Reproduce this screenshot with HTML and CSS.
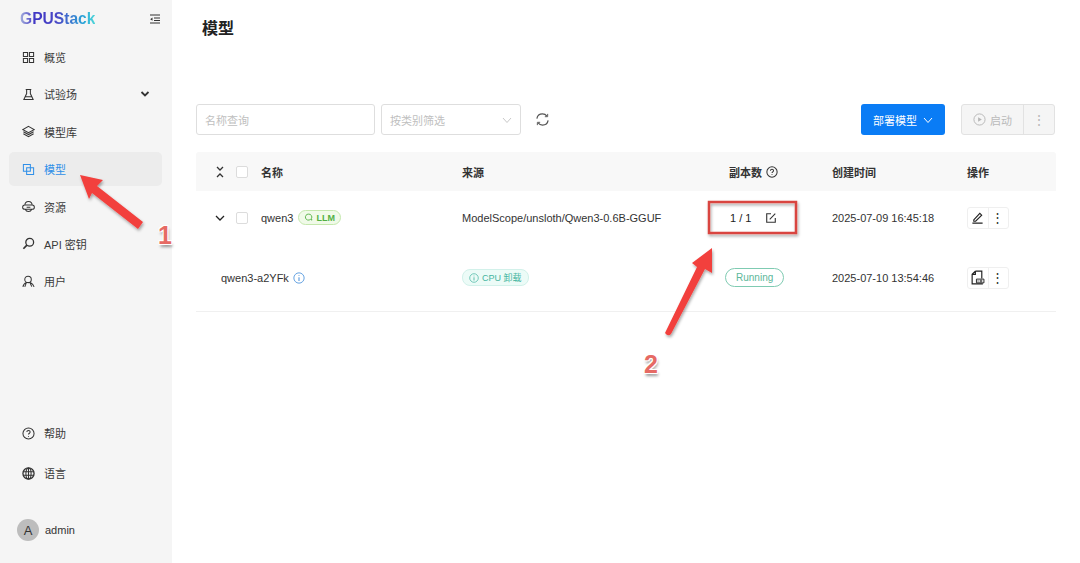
FILE: index.html
```html
<!DOCTYPE html>
<html lang="en">
<head>
  <meta charset="UTF-8">
  <title>GPUStack</title>
  <link rel="stylesheet" href="styles.css">
</head>
<body>
  <div class="app">
    <aside class="sidebar">
      <div class="brand">
        <span class="logo">GPUStack</span>
        <svg class="collapse" viewBox="0 0 12 12" width="12" height="12"><path d="M1 2h10M5 5h6M5 7.500h6M1 10h10" fill="none" stroke="#333" stroke-width="1.100"/><path d="M3.500 4.500 1.200 6.200l2.300 1.600z" fill="#333"/></svg>
      </div>
      <nav class="menu">
        <a class="item">
          <svg viewBox="0 0 14 14"><path d="M1.500 1.500h4.500v4.500h-4.500zM8 1.500h4.500v4.500h-4.500zM1.500 8h4.500v4.500h-4.500zM8 8h4.500v4.500h-4.500z"/></svg>
          <span>概览</span>
        </a>
        <a class="item">
          <svg viewBox="0 0 14 14"><path d="M4 1.500h6M5 1.500v4.500l-3 6.500h10l-3-6.500v-4.500M3.500 9.500h7"/></svg>
          <span>试验场</span>
          <svg class="caret" viewBox="0 0 10 10"><path d="M1.500 3 5 6.500 8.500 3"/></svg>
        </a>
        <a class="item">
          <svg viewBox="0 0 14 14"><path d="M7 1.500 13 5 7 8.300 1 5zM1.500 7.200 7 10.300l5.500-3.100M1.500 9.400 7 12.500l5.500-3.100"/></svg>
          <span>模型库</span>
        </a>
        <a class="item active">
          <svg viewBox="0 0 14 14"><path d="M1.500 1.500h7.500v7.500h-7.500zM5 5h7.500v7.500h-7.500z"/></svg>
          <span>模型</span>
        </a>
        <a class="item">
          <svg viewBox="0 0 14 14"><path d="M3 6c0-2.700 1.800-4.500 4-4.500s4 1.800 4 4.500M3 5.500h8c1.300 0 2.300 1 2.300 2.200s-1 2.300-2.300 2.300h-8c-1.300 0-2.300-1-2.300-2.300s1-2.200 2.300-2.200zM3.500 10c.6 1.600 2 2.500 3.500 2.500s2.900-.9 3.500-2.500M5 7.800h4"/></svg>
          <span>资源</span>
        </a>
        <a class="item">
          <svg viewBox="0 0 14 14"><circle cx="8.300" cy="5.700" r="4.200" stroke-width="1.400"/><path d="M5.300 8.700 1.500 12.700" stroke-width="1.800"/></svg>
          <span>API 密钥</span>
        </a>
        <a class="item">
          <svg viewBox="0 0 14 14"><circle cx="6.500" cy="4.800" r="3.500"/><path d="M1 12.800c.3-2.300 2-4.100 3.800-4.800l3.200 0M9 8c1.800 1 3.400 2.700 4 4.800M4.800 8 3 12.800M8.500 8l2 4.500"/></svg>
          <span>用户</span>
        </a>
      </nav>
      <div class="menu-bottom">
        <a class="item">
          <svg viewBox="0 0 14 14"><circle cx="7" cy="7" r="6"/><path d="M5.200 5.500c0-1.100.8-1.800 1.800-1.800s1.800.7 1.800 1.700c0 1.300-1.800 1.400-1.800 2.800M7 9.700v.8"/></svg>
          <span>帮助</span>
        </a>
        <a class="item">
          <svg viewBox="0 0 14 14"><circle cx="7" cy="7" r="6" stroke-width="1.400"/><ellipse cx="7" cy="7" rx="2.800" ry="6"/><path d="M1 5h12M1 9h12M7 1v12"/></svg>
          <span>语言</span>
        </a>
        <div class="user">
          <span class="avatar">A</span>
          <span>admin</span>
        </div>
      </div>
    </aside>

    <main class="content">
      <h1 class="title">模型</h1>

      <div class="toolbar">
        <div class="input">名称查询</div>
        <div class="select">
          <span>按类别筛选</span>
          <svg viewBox="0 0 10 10" width="10" height="10"><path d="M1 3 5 7.500 9 3" fill="none" stroke="#c8c8c8" stroke-width="1"/></svg>
        </div>
        <svg class="refresh" viewBox="0 0 16 16" width="15" height="15"><path d="M2 7c.5-3 2.900-5 6-5 2 0 3.600.9 4.700 2.300M14 9c-.5 3-2.900 5-6 5-2 0-3.600-.9-4.700-2.300" fill="none" stroke="#555" stroke-width="1.300"/><path d="M13.500 2v3h-3M2.500 14v-3h3" fill="none" stroke="#555" stroke-width="1"/></svg>
        <div class="spacer"></div>
        <button class="btn-primary">
          <span>部署模型</span>
          <svg viewBox="0 0 10 10" width="10" height="10"><path d="M1 3 5 7.500 9 3" fill="none" stroke="#fff" stroke-width="1"/></svg>
        </button>
        <div class="btn-group">
          <div class="btn-start">
            <svg viewBox="0 0 14 14" width="13" height="13"><circle cx="7" cy="7" r="6" fill="none" stroke="#b5b5b5"/><path d="M5.500 4.500v5l4-2.500z" fill="#b5b5b5"/></svg>
            <span>启动</span>
          </div>
          <div class="btn-more">⋮</div>
        </div>
      </div>

      <div class="table">
        <div class="row head">
          <div class="cell name-cell">
            <svg class="expand-all" viewBox="0 0 10 12" width="10" height="12"><path d="M2 1 5 4 8 1M2 11 5 8 8 11" fill="none" stroke="#333" stroke-width="1.300"/></svg>
            <span class="check"></span>
            <span>名称</span>
          </div>
          <div class="cell">来源</div>
          <div class="cell">副本数
            <svg class="help" viewBox="0 0 14 14" width="12" height="12"><circle cx="7" cy="7" r="6" fill="none" stroke="#333" stroke-width="1.200"/><path d="M5.200 5.500c0-1.100.8-1.800 1.800-1.800s1.800.7 1.800 1.700c0 1.300-1.800 1.400-1.800 2.800M7 9.700v.8" fill="none" stroke="#333" stroke-width="1.200"/></svg>
          </div>
          <div class="cell">创建时间</div>
          <div class="cell">操作</div>
        </div>

        <div class="row parent">
          <div class="cell name-cell">
            <svg class="expand" viewBox="0 0 10 10" width="10" height="10"><path d="M1 3 5 7 9 3" fill="none" stroke="#222" stroke-width="1.300"/></svg>
            <span class="check"></span>
            <span>qwen3</span>
            <span class="tag tag-llm">
              <svg viewBox="0 0 12 12" width="9" height="9"><path d="M6 1.500a4 4 0 1 0 2.500 7l2 1-.6-2A4 4 0 0 0 6 1.500z" fill="none" stroke="#52b043" stroke-width="1.200"/></svg>
              LLM
            </span>
          </div>
          <div class="cell">ModelScope/unsloth/Qwen3-0.6B-GGUF</div>
          <div class="cell replicas">
            <span>1 / 1</span>
            <svg viewBox="0 0 14 14" width="12" height="12"><path d="M7 2H2v10h10V7M5.500 8.500 12 2" fill="none" stroke="#333" stroke-width="1.300"/></svg>
          </div>
          <div class="cell">2025-07-09 16:45:18</div>
          <div class="cell">
            <div class="actions">
              <span class="act">
                <svg viewBox="0 0 14 14" width="13" height="13"><path d="M3 9.500 9.500 2.500l2 2L5 11H3zM1.500 13h11" fill="none" stroke="#222" stroke-width="1.200"/></svg>
              </span>
              <span class="act dots">⋮</span>
            </div>
          </div>
        </div>

        <div class="row child">
          <div class="cell child-name">
            <span>qwen3-a2YFk</span>
            <svg viewBox="0 0 14 14" width="12" height="12"><circle cx="7" cy="7" r="6" fill="none" stroke="#4c93dc"/><path d="M7 6v4.500M7 3.700v1" fill="none" stroke="#4c93dc" stroke-width="1.200"/></svg>
          </div>
          <div class="cell">
            <span class="tag tag-cpu">
              <svg viewBox="0 0 14 14" width="10" height="10"><circle cx="7" cy="7" r="6" fill="none" stroke="#45b5a0"/><path d="M7 6v4.500M7 3.700v1" fill="none" stroke="#45b5a0" stroke-width="1.200"/></svg>
              CPU 卸载
            </span>
          </div>
          <div class="cell status-cell"><span class="status">Running</span></div>
          <div class="cell">2025-07-10 13:54:46</div>
          <div class="cell">
            <div class="actions">
              <span class="act">
                <svg viewBox="0 0 14 14" width="15" height="15"><path d="M5 1h6v7M5 1 2 4v9h10M5 1v3H2" fill="none" stroke="#222" stroke-width="1.100"/><path d="M6 8.500h7v3.500H6z" fill="#fff" stroke="#222" stroke-width=".9"/><path d="M7.500 9.500v1.500M9.500 9.500h1.500v1.500H9.500z" fill="none" stroke="#222" stroke-width=".7"/></svg>
              </span>
              <span class="act dots">⋮</span>
            </div>
          </div>
        </div>
      </div>
    </main>
  </div>

  <!-- annotations drawn on top of the screenshot -->
  <svg class="notes" viewBox="0 0 1080 563" width="1080" height="563">
    <defs>
      <filter id="soft" x="-20%" y="-20%" width="140%" height="140%">
        <feDropShadow dx="1" dy="2" stdDeviation="1.500" flood-color="#000" flood-opacity=".35"/>
      </filter>
    </defs>
    <path filter="url(#soft)" fill="#f2403d" d="M80 175 L103 180 L97 186 L143 222 L138 229 L92 193 L89 199 Z"/>
    <path filter="url(#soft)" fill="#f2403d" d="M712 248 L712 273 L705 269 L671 334 Q668 337 665 333 L697 267 L692 263 Z"/>
    <rect filter="url(#soft)" x="709" y="202" width="87" height="31" fill="none" stroke="#d9453f" stroke-width="2.500"/>
  </svg>
  <span class="num num-1">1</span>
  <span class="num num-2">2</span>
</body>
</html>
```

FILE: styles.css
```css
* {
  box-sizing: border-box;
}

body {
  margin: 0;
  width: 1080px;
  height: 563px;
  overflow: hidden;
  position: relative;
  background: #fff;
  color: #333;
  font-family: "Liberation Sans", "Noto Sans CJK SC", sans-serif;
  font-size: 11px;
}

.app {
  display: flex;
  height: 563px;
}

.sidebar {
  width: 172px;
  flex: none;
  display: flex;
  flex-direction: column;
  background: #f5f5f5;
}

.brand {
  display: flex;
  align-items: center;
  justify-content: space-between;
  height: 37px;
  padding: 0 11px 0 20px;
}

.logo {
  font-size: 15.600px;
  font-weight: bold;
  background: linear-gradient(90deg, #a5b0dc 0%, #3f35c4 20%, #4a49c6 50%, #2aa5d8 85%, #4fd6d8 100%);
  -webkit-background-clip: text;
  background-clip: text;
  color: transparent;
}

.menu {
  display: flex;
  flex-direction: column;
  gap: 3.400px;
  padding: 3px 10px 0 9px;
}

.item {
  display: flex;
  align-items: center;
  gap: 9px;
  height: 34px;
  padding: 0 12px 0 13px;
  border-radius: 5px;
  color: #3a3a3a;
}

.item svg {
  width: 13px;
  height: 13px;
  flex: none;
  fill: none;
  stroke: #333;
  stroke-width: 1.100;
}

.item .caret {
  width: 10px;
  height: 10px;
  margin-left: auto;
  stroke-width: 1.800;
}

.item.active {
  background: #ececec;
  color: #2f8fe8;
}

.item.active svg {
  stroke: #2f8fe8;
}

.menu-bottom {
  margin-top: auto;
  display: flex;
  flex-direction: column;
  padding: 0 10px 22px 9px;
  gap: 6px;
}

.user {
  display: flex;
  align-items: center;
  gap: 6px;
  padding-left: 8px;
  margin-top: 23px;
  height: 22px;
}

.avatar {
  width: 22px;
  height: 22px;
  border-radius: 50%;
  background: #bdbdbd;
  display: flex;
  align-items: center;
  justify-content: center;
  font-size: 13px;
}

.content {
  flex: 1;
  padding: 0 24px 0 24px;
}

.title {
  margin: 0;
  padding: 0 0 0 6px;
  height: 104px;
  line-height: 57px;
  font-size: 16px;
  font-weight: bold;
  color: #222;
}

.toolbar {
  display: flex;
  align-items: center;
  height: 31px;
}

.input,
.select {
  height: 31px;
  display: flex;
  align-items: center;
  border: 1px solid #dedede;
  border-radius: 3px;
  color: #c0c0c0;
  padding: 0 8px;
}

.input {
  width: 179px;
  margin-right: 6px;
}

.select {
  width: 140px;
  justify-content: space-between;
}

.refresh {
  margin: 0 0 0 14px;
}

.spacer {
  flex: 1;
}

.btn-primary {
  width: 84px;
  height: 31px;
  display: flex;
  align-items: center;
  justify-content: center;
  gap: 6px;
  border: none;
  border-radius: 3px;
  background: #0a7cf5;
  color: #fff;
  font: inherit;
}

.btn-group {
  display: flex;
  width: 94px;
  height: 31px;
  margin-left: 16px;
  margin-right: 1px;
  border: 1px solid #e2e2e2;
  border-radius: 3px;
  background: #f5f5f5;
  color: #bababa;
}

.btn-start {
  flex: 1;
  display: flex;
  align-items: center;
  justify-content: center;
  gap: 4px;
  border-right: 1px solid #e2e2e2;
}

.btn-more {
  width: 30px;
  display: flex;
  align-items: center;
  justify-content: center;
  font-size: 14px;
}

.table {
  margin-top: 17px;
  width: 860px;
}

.row {
  display: grid;
  grid-template-columns: 266px 267px 103px 135px 89px;
  align-items: center;
}

.head {
  height: 39px;
  background: #f8f8f8;
  font-weight: bold;
  color: #333;
  border-radius: 3px 3px 0 0;
}

.parent {
  height: 53px;
}

.child {
  height: 68px;
  border-bottom: 1px solid #f0f0f0;
}

.cell {
  display: flex;
  align-items: center;
  gap: 4px;
}

.name-cell {
  padding-left: 19px;
}

.expand-all,
.expand {
  margin-right: 7px;
}

.check {
  width: 12px;
  height: 12px;
  margin-right: 9px;
  border: 1px solid #dcdcdc;
  border-radius: 2px;
  background: #fff;
}

.tag {
  display: inline-flex;
  align-items: center;
  gap: 3px;
  height: 15px;
  padding: 0 5px;
  border-radius: 8px;
  font-size: 9px;
}

.tag-llm {
  margin-left: 1px;
  background: #f0fae8;
  border: 1px solid #c5e8ae;
  color: #52b043;
  font-weight: bold;
}

.tag-cpu {
  height: 17px;
  padding: 0 6px;
  background: #ecfbf7;
  border: 1px solid #d2f1ea;
  color: #45b5a0;
}

.replicas {
  gap: 14px;
  padding-left: 1px;
  color: #222;
}

.child-name {
  padding-left: 25px;
}

.status-cell {
  margin-left: -4px;
}

.status {
  display: inline-flex;
  align-items: center;
  height: 19px;
  padding: 0 10px;
  border: 1px solid #7fcbb2;
  border-radius: 10px;
  color: #5cb79a;
  font-size: 10px;
}

.actions {
  display: flex;
  width: 42px;
  height: 22px;
  border: 1px solid #efefef;
  border-radius: 3px;
}

.act {
  width: 21px;
  display: flex;
  align-items: center;
  justify-content: center;
}

.act:first-child {
  border-right: 1px solid #efefef;
}

.dots {
  font-size: 13px;
  color: #333;
  margin-left: -1px;
}

.notes {
  position: absolute;
  left: 0;
  top: 0;
  pointer-events: none;
}

.num {
  position: absolute;
  font-size: 25px;
  font-weight: bold;
  color: #e66a64;
  text-shadow: 1px 1px 0 #fff, -1px -1px 0 #fff, 1px -1px 0 #fff, -1px 1px 0 #fff, 1px 3px 3px rgba(0, 0, 0, .4);
}

.num-1 {
  left: 158px;
  top: 221px;
}

.num-2 {
  left: 644px;
  top: 350px;
}
```
